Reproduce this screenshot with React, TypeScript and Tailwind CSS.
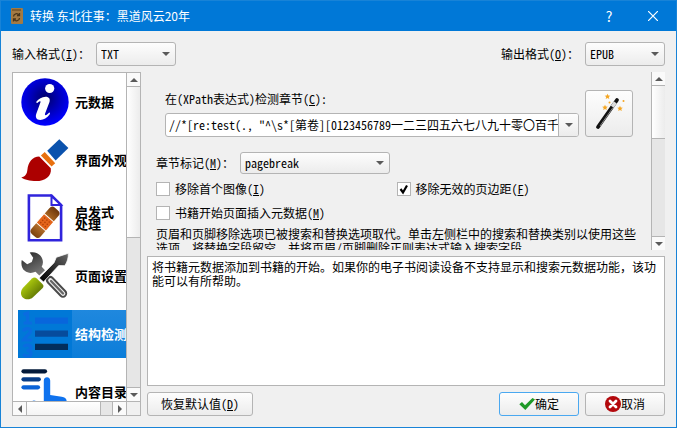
import { ReactNode, useState } from "react";

const border = 'border border-[#b4b4b4]'
const buttonStyle = 'rounded-[3px] bg-linear-to-b from-[#fdfdfd] to-[#ececec]'

function InfoIcon()
{
    return <svg viewBox="0 0 48 48" className="size-12">
        <defs>
            <radialGradient id="info" cx="50%" cy="42%" r="55%">
                <stop offset="0" stopColor="#000068" />
                <stop offset="0.5" stopColor="#0000b4" />
                <stop offset="1" stopColor="#0000fc" />
            </radialGradient>
        </defs>
        <circle cx="24" cy="24" r="23.7" fill="url(#info)" />
        <circle cx="28.7" cy="10.5" r="4.6" fill="#fff" />
        <path d="M15.500 23.500c2-2.600 5.500-4.800 9-4.800 3.800 0 4.800 2.400 4 5.300l-4.400 11.600c-.6 1.900.6 2.200 2 .9l2.200-1.900c.8.3.9 1.100.3 1.900-2.400 3.200-6 5.500-9.300 5.500-3.900 0-5.100-2.600-4.100-5.900l4.200-11.600c.5-1.600-.7-1.700-1.900-.6l-1.200 1c-1 .1-1.300-.8-.8-1.400z" fill="#fff" />
    </svg>
}

function BrushIcon()
{
    return <svg viewBox="0 0 48 48" className="size-12">
        <path d="M38.300 3.300 47.400 12 34.600 24.400l-8.400-9.700z" fill="#0b52ad" />
        <path d="m23.700 16.100 10.500 11.100-3.600 3.400-10.700-11z" fill="#e8700f" />
        <path d="M18.200 20.500 29.800 32.200c1.200 8.400-6.200 12.900-14.500 12.900-6.500 0-12-1.600-15-3.600 4.200-1 5.600-3.400 6.100-7.700.7-7.700 5.200-13.200 11.800-13.300z" fill="#ac0000" />
    </svg>
}

function HeuristicIcon()
{
    return <svg viewBox="0 0 48 48" className="size-12">
        <defs>
            <linearGradient id="plaster" x1="0" x2="1">
                <stop offset="0" stopColor="#7b420e" />
                <stop offset="0.3" stopColor="#b06c2b" />
                <stop offset="0.7" stopColor="#a4611f" />
                <stop offset="1" stopColor="#6b350a" />
            </linearGradient>
        </defs>
        <path d="M7.900 1.500H30.500L40.100 11V46.300H7.900z" fill="#fff" stroke="#3024dc" strokeWidth="2.600" />
        <path d="M30.500 2V11h9.400z" fill="#fff" stroke="#3024dc" strokeWidth="2" />
        <g transform="translate(24 28.300) rotate(-49)">
            <rect x="-17.500" y="-6" width="35" height="12" rx="4" fill="url(#plaster)" />
            <rect x="-6" y="-6.500" width="12" height="13" fill="#e4651b" stroke="#fff" strokeWidth="1" />
            <g fill="#b24008">
                <circle cx="-3" cy="-3" r=".8" /><circle cx="0" cy="-3" r=".8" /><circle cx="3" cy="-3" r=".8" />
                <circle cx="-3" cy="0" r=".8" /><circle cx="0" cy="0" r=".8" /><circle cx="3" cy="0" r=".8" />
                <circle cx="-3" cy="3" r=".8" /><circle cx="0" cy="3" r=".8" /><circle cx="3" cy="3" r=".8" />
            </g>
        </g>
    </svg>
}

function ToolsIcon()
{
    return <svg viewBox="0 0 48 48" className="size-12">
        <defs>
            <linearGradient id="steel" x1="0" y1="0" x2="0.6" y2="1">
                <stop offset="0" stopColor="#222" />
                <stop offset="1" stopColor="#777" />
            </linearGradient>
            <linearGradient id="blade" x1="1" y1="0" x2="0" y2="1">
                <stop offset="0" stopColor="#6a6a6a" />
                <stop offset="0.5" stopColor="#2c2c2c" />
                <stop offset="1" stopColor="#000" />
            </linearGradient>
            <linearGradient id="handle" x1="0" y1="0" x2="1" y2="1">
                <stop offset="0.1" stopColor="#c0df10" />
                <stop offset="1" stopColor="#405400" />
            </linearGradient>
        </defs>
        <path d="M8.700.600c4-1.200 8.500.2 11 3.400 2.500 3.200 3 7.500 1 10.800l3.300 3.400-5.700 5.300-3.800-3.700c-3.500 1.700-7.800 1.500-10.700-1C.700 16.500-.200 12 .800 8l5.400 4.300 4.600-2.200 1.400-4.300z" fill="url(#steel)" />
        <g fill="none" strokeLinecap="round">
            <path d="M29 28 42 41.500" stroke="#4a4a4a" strokeWidth="8.400" />
            <path d="M29.500 28.500 42 41.500" stroke="#eee" strokeWidth="4.600" />
            <path d="M30 29 42 41.500" stroke="#666" strokeWidth="2.400" />
        </g>
        <path d="M47.300 1.300c.3 4.500-1 9-3.600 12.400l-6-.1L22.500 30 18.200 26 33 10.800l2.300-5.500z" fill="url(#blade)" stroke="#fff" strokeWidth=".8" />
        <path d="M11 26.500c1.500-1.200 3.500-1.200 4.800 0l5.600 5.500c1.200 1.200 1.400 2.500.3 3.900L12 45.300c-3 2.700-7.500 2.700-10.200.2C-.800 42.800-.500 39 1.800 36z" fill="url(#handle)" />
    </svg>
}

function StructureIcon()
{
    return <svg viewBox="0 0 48 48" className="size-12">
        <g fill="none" stroke="#0a6ce0" strokeWidth="3.200">
            <path d="M2.500 4.500 6.500 3v10M2.500 13h8.500" />
            <path d="M2.500 21.500c1-4 7.500-3.500 7 0 0 2-5.500 5.500-7 8.500h8.500" />
            <path d="M3 37c1.500-3 7-2.500 7 1 0 2.500-2.500 2.500-4.500 2.500 3 0 5 1 4.500 3.500-.5 3-6 3-7.500 0" />
        </g>
        <path d="M14 7.500h33v6.300H14z" fill="#0866dc" />
        <path d="M14 20.500h33v6.300H14z" fill="#064b9c" />
        <path d="M14 33.700h33V40H14z" fill="#022d5c" />
    </svg>
}

function TocIcon()
{
    return <svg viewBox="0 0 48 48" className="size-12">
        <g strokeWidth="4.200" strokeLinecap="round">
            <path d="M2.500 3.300H24" stroke="#031a3a" />
            <path d="M2.500 11.300H17.800" stroke="#063c86" />
            <path d="M2.500 19.300H17" stroke="#0a63d8" />
        </g>
        <path d="M22.800 12.500c0-4.500 6.400-4.500 6.400 0V27l11.500 1.700c3 .5 5 1.800 5 4.800V48H20l-9-12c-1.500-3 1.500-4.500 4-3l7.800 4.500z" fill="#0f72ee" />
    </svg>
}

function AppIcon()
{
    return <svg viewBox="0 0 12 16" className="h-4 w-3">
        <rect width="12" height="16" rx="1" fill="#a37a43" />
        <path d="M1 2h9" stroke="#5e4320" />
        <path d="M2.500 8.500a3 3 0 0 1 5.500-1.500M8.500 10a3 3 0 0 1-5.500 1.500M8.500 5v2.500H6M2.500 13.500V11H5" fill="none" stroke="#4a3519" strokeWidth="1.300" />
    </svg>
}

function WandIcon()
{
    const star = 'M0-2.800.8-.9 2.800-.8 1.300.6 1.800 2.600 0 1.500-1.800 2.600-1.300.6-2.800-.8-.8-.9z'
    return <svg viewBox="0 0 36 36" className="size-9 overflow-visible">
        <path d="M7 31 26 4" stroke="#111" strokeWidth="3.800" strokeLinecap="round" />
        <path d="m9 30 13-18.500" stroke="#8a8a8a" strokeWidth="1" />
        <path d="m21.300 10.700 3-4.300" stroke="#dcdcdc" strokeWidth="3.600" />
        <g fill="#f5a623">
            <path transform="translate(16.500 0.500)" d={star} />
            <path transform="translate(14 11.500)" d={star} />
            <path transform="translate(29 12.500)" d={star} />
            <circle cx="32.500" cy="5" r="1" />
            <circle cx="18.500" cy="6.500" r="1" />
        </g>
    </svg>
}

function OkIcon()
{
    return <svg viewBox="0 0 16 16" className="size-4">
        <path d="M.3 8.300 3 6l3 3.200L13.500 2 16 3.600 6.300 14z" fill="#1f9a28" />
    </svg>
}

function CancelIcon()
{
    return <svg viewBox="0 0 16 16" className="size-4">
        <circle cx="8" cy="8" r="8" fill="#b3090d" />
        <path d="m5 5 6 6m0-6-6 6" stroke="#fff" strokeWidth="2.800" strokeLinecap="round" />
    </svg>
}

type Direction = 'up' | 'down' | 'left' | 'right'

const arrows: Record<Direction, string> = {
    up: 'M0 6 4 2 8 6z',
    down: 'M0 2h8L4 6z',
    left: 'M6 0v8L2 4z',
    right: 'M2 0v8l4-4z',
}

function Arrow({direction}: {direction: Direction})
{
    return <svg viewBox="0 0 8 8" className="size-2"><path d={arrows[direction]} fill="#5a5a5a" /></svg>
}

function ScrollButton({direction, label, className}: {direction: Direction, label: string, className: string})
{
    return <button aria-label={label} className={`flex shrink-0 items-center justify-center border-[#b4b4b4] bg-[#fafafa] ${className}`}>
        <Arrow direction={direction} />
    </button>
}

// handle and track share the space between the two buttons
function VerticalScrollbar({handle, track}: {handle: string, track: string})
{
    return <div className="flex w-3.5 shrink-0 flex-col border-l border-[#b4b4b4]">
        <ScrollButton direction="up" label="向上滚动" className="h-3.5 border-b" />
        <div className={`border-b border-[#b4b4b4] bg-linear-to-r from-white to-[#ececec] ${handle}`} />
        <div className={`bg-[#e6e6e6] ${track}`} />
        <ScrollButton direction="down" label="向下滚动" className="h-3.5 border-t" />
    </div>
}

function Combo({id, options, className}: {id: string, options: string[], className: string})
{
    return <div className={`relative ${className}`}>
        <select id={id} className={`size-full appearance-none pl-1 pr-6 leading-[18px] ${border} ${buttonStyle}`}>
            {options.map(option => <option key={option}>{option}</option>)}
        </select>
        <span className="pointer-events-none absolute inset-y-0 right-1.5 flex items-center"><Arrow direction="down" /></span>
    </div>
}

function Check({children, defaultChecked}: {children: ReactNode, defaultChecked?: boolean})
{
    const [checked, setChecked] = useState(!!defaultChecked)
    return <label className="flex h-3.5 items-center gap-[5px] whitespace-nowrap">
        <span className="relative size-3.5 shrink-0">
            <input type="checkbox" checked={checked} onChange={e => setChecked(e.target.checked)} className={`block size-full appearance-none bg-white ${border}`} />
            {checked && <svg viewBox="0 0 14 14" className="pointer-events-none absolute inset-0 size-full">
                <path d="m3.500 7 2.500 3.500 4-7" fill="none" stroke="#000" strokeWidth="2.200" />
            </svg>}
        </span>
        <span>{children}</span>
    </label>
}

const sections = [
    {name: ['元数据'], icon: InfoIcon},
    {name: ['界面外观'], icon: BrushIcon},
    {name: ['启发式', '处理'], icon: HeuristicIcon},
    {name: ['页面设置'], icon: ToolsIcon},
    {name: ['结构检测'], icon: StructureIcon},
    {name: ['内容目录'], icon: TocIcon},
]

function SectionList()
{
    const [selected, setSelected] = useState(4)

    return <nav className={`flex w-[129px] shrink-0 flex-col bg-white ${border}`}>
        <div className="flex min-h-0 flex-1">
            <div className="flex min-w-0 flex-1 flex-col gap-2.5 overflow-hidden pt-[5px] pl-[5px]">
                {sections.map(({name, icon: Icon}, i) => <button
                    key={i}
                    onClick={() => setSelected(i)}
                    className={`flex h-12 shrink-0 items-center text-left ${selected === i ? 'bg-[#0078d7] text-white' : ''}`}
                >
                    <span className="flex w-[54px] shrink-0 justify-center"><Icon /></span>
                    <span className={`flex h-full flex-1 flex-col justify-center overflow-hidden pl-[3px] text-[13px] leading-3 font-bold whitespace-nowrap ${selected === i ? 'bg-linear-to-b from-[#1f88de] to-[#0a7dd9]' : ''}`}>
                        {name.map(line => <span key={line}>{line}</span>)}
                    </span>
                </button>)}
            </div>
            <VerticalScrollbar handle="flex-1" track="flex-1" />
        </div>
        <div className="flex h-3.5 shrink-0 border-t border-[#b4b4b4]">
            <ScrollButton direction="left" label="向左滚动" className="w-3.5 border-r" />
            <div className="flex-1 bg-linear-to-b from-white to-[#f4f4f4]" />
            <div className="w-3 border-l border-[#b4b4b4] bg-[#e6e6e6]" />
            <ScrollButton direction="right" label="向右滚动" className="w-3.5 border-l" />
            <div className="w-3.5 border-l border-[#b4b4b4] bg-[#f0f0f0]" />
        </div>
    </nav>
}

function App()
{
    const [xpath, setXpath] = useState('//*[re:test(., "^\\s*[第卷][0123456789一二三四五六七八九十零〇百千')

    return <div className="flex h-screen flex-col border border-[#1883d7] bg-[#f0f0f0] font-['Noto_Sans_Mono_CJK_SC','Liberation_Serif','Noto_Sans_CJK_SC',serif] text-[12px] leading-[14px] text-black">
        <header className="flex h-[30px] shrink-0 items-center bg-[#0078d7] pr-[11px] pl-2.5 font-['Noto_Sans_CJK_SC',sans-serif] text-white">
            <AppIcon />
            <h1 className="flex-1 pl-[7px]">转换 东北往事：黑道风云20年</h1>
            <button aria-label="帮助" className="w-6 text-[14px]">?</button>
            <button aria-label="关闭" className="ml-5 flex w-6 justify-center">
                <svg viewBox="0 0 10 10" className="size-2.5"><path d="m0 0 10 10M10 0 0 10" stroke="#fff" strokeWidth="1.200" /></svg>
            </button>
        </header>

        <main className="flex min-h-0 flex-1 flex-col gap-1.5 px-[11px] pt-[11px] pb-[11px]">
            <div className="flex h-6 shrink-0 items-center">
                <label htmlFor="input-format" className="w-[84px] whitespace-nowrap">输入格式(<u>I</u>)：</label>
                <Combo id="input-format" options={['TXT', 'EPUB', 'MOBI']} className="h-6 w-20" />
                <span className="flex-1" />
                <label htmlFor="output-format" className="w-[84px] whitespace-nowrap">输出格式(<u>O</u>)：</label>
                <Combo id="output-format" options={['EPUB', 'MOBI', 'TXT']} className="h-6 w-20" />
            </div>

            <div className="flex min-h-0 flex-1 gap-1.5">
                <SectionList />
                <div className="flex min-w-0 flex-1 flex-col">
                    <section className="flex min-h-0 flex-[178]">
                        <div className="min-w-0 flex-1 overflow-hidden pt-[18px] pr-3.5 pl-[9px]">
                            <div className="flex gap-1.5 pr-1 pl-[9px]">
                                <div className="flex min-w-0 flex-1 flex-col justify-between pt-0.5">
                                    <label htmlFor="xpath">在(XPath表达式)检测章节(<u>C</u>):</label>
                                    <div className={`flex h-6 overflow-hidden rounded-[3px] bg-white ${border}`}>
                                        <input id="xpath" value={xpath} onChange={e => setXpath(e.target.value)} className="min-w-0 flex-1 pl-[3px] outline-none" />
                                        <button aria-label="显示历史" className="flex w-5 items-center justify-center border-l border-[#b4b4b4] bg-linear-to-b from-[#fdfdfd] to-[#ececec]">
                                            <Arrow direction="down" />
                                        </button>
                                    </div>
                                </div>
                                <button aria-label="XPath 向导" className={`flex h-[47px] w-12 shrink-0 items-center justify-center ${border} ${buttonStyle}`}>
                                    <WandIcon />
                                </button>
                            </div>
                            <div className="mt-[15px] flex h-[22px] items-center">
                                <label htmlFor="mark" className="w-[84px] whitespace-nowrap">章节标记(<u>M</u>)：</label>
                                <Combo id="mark" options={['pagebreak', 'rule', 'both', 'none']} className="h-[22px] w-[150px]" />
                            </div>
                            <div className="mt-2 grid grid-cols-2 gap-y-2.5">
                                <Check>移除首个图像(<u>I</u>)</Check>
                                <Check defaultChecked>移除无效的页边距(<u>F</u>)</Check>
                                <Check>书籍开始页面插入元数据(<u>M</u>)</Check>
                            </div>
                            <p className="mt-[7px]">页眉和页脚移除选项已被搜索和替换选项取代。单击左侧栏中的搜索和替换类别以使用这些选项。将替换字段留空，并将页眉/页脚删除正则表达式输入搜索字段。</p>
                        </div>
                        <VerticalScrollbar handle="flex-[53]" track="flex-[98]" />
                    </section>

                    <div className="mt-1.5 min-h-0 flex-[130]">
                        <textarea
                            readOnly
                            aria-label="选项说明"
                            className={`block size-full resize-none bg-white px-1 py-[3px] outline-none ${border}`}
                            value="将书籍元数据添加到书籍的开始。如果你的电子书阅读设备不支持显示和搜索元数据功能，该功能可以有所帮助。"
                        />
                    </div>

                    <footer className="mt-1.5 flex h-6 shrink-0 gap-1.5">
                        <button className={`w-[106px] ${border} ${buttonStyle}`}>恢复默认值(<u>D</u>)</button>
                        <span className="flex-1" />
                        <button className={`flex w-20 items-center justify-center border border-[#4aa8f0] ${buttonStyle}`}><OkIcon />确定</button>
                        <button className={`flex w-20 items-center justify-center ${border} ${buttonStyle}`}><CancelIcon />取消</button>
                    </footer>
                </div>
            </div>
        </main>
    </div>
}

export default App;
